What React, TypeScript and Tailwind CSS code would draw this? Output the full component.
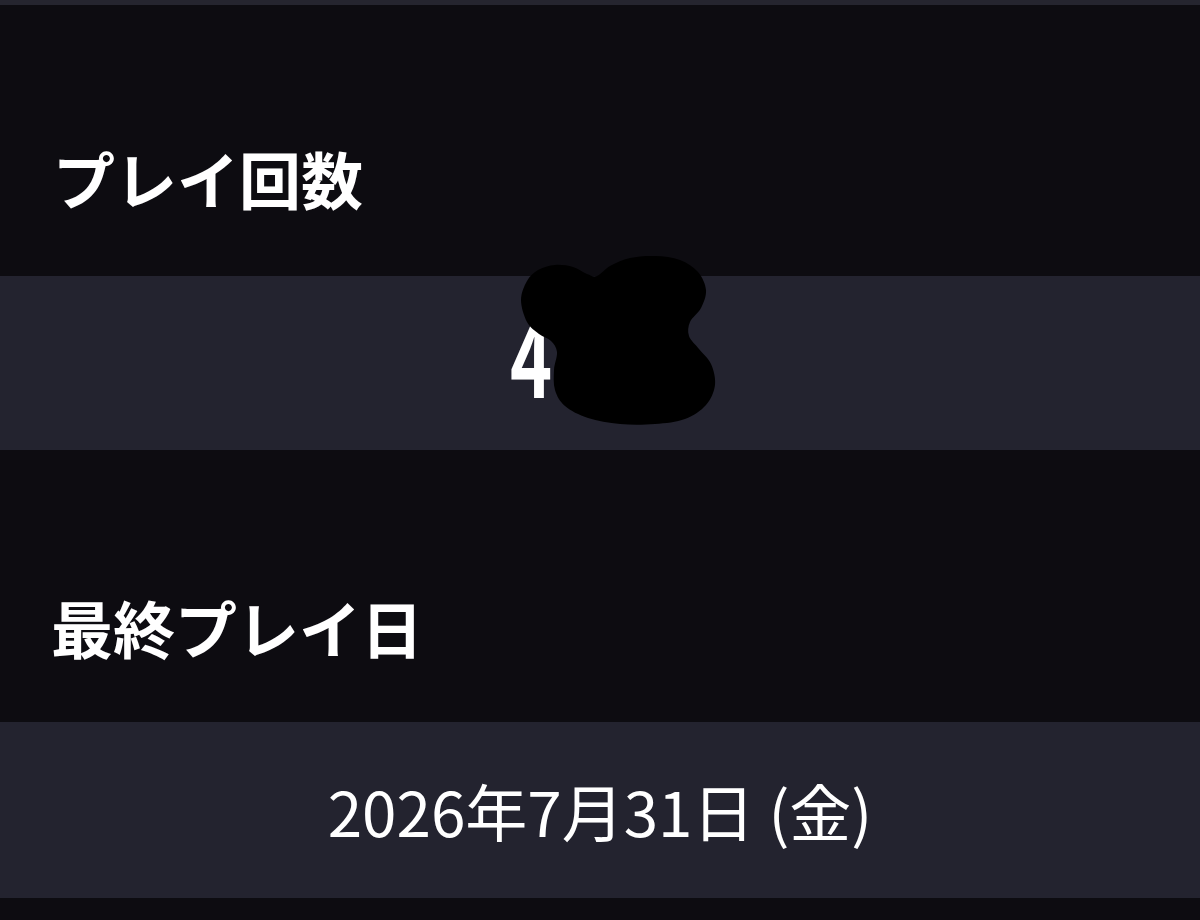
import React from "react";

const jp = { fontFamily: '"Noto Sans CJK JP", "Noto Sans", sans-serif' };

const pts: [number, number][] = [
  [521, 300],
  [527, 281],
  [538, 270],
  [555, 265],
  [573, 267],
  [587, 274],
  [597, 276],
  [610, 266],
  [630, 258],
  [655, 256],
  [680, 260],
  [698, 272],
  [706, 290],
  [701, 308],
  [690, 322],
  [689, 336],
  [699, 349],
  [711, 364],
  [715, 385],
  [706, 405],
  [685, 419],
  [655, 424],
  [620, 424],
  [588, 418],
  [565, 406],
  [555, 390],
  [554, 370],
  [557, 352],
  [551, 341],
  [539, 334],
  [527, 322],
];

function smoothPath(p: [number, number][]) {
  const n = p.length;
  let d = `M${p[0][0]} ${p[0][1]}`;
  for (let i = 0; i < n; i++) {
    const p0 = p[(i - 1 + n) % n];
    const p1 = p[i];
    const p2 = p[(i + 1) % n];
    const p3 = p[(i + 2) % n];
    const c1x = p1[0] + (p2[0] - p0[0]) / 6;
    const c1y = p1[1] + (p2[1] - p0[1]) / 6;
    const c2x = p2[0] - (p3[0] - p1[0]) / 6;
    const c2y = p2[1] - (p3[1] - p1[1]) / 6;
    d += ` C${c1x.toFixed(1)} ${c1y.toFixed(1)} ${c2x.toFixed(1)} ${c2y.toFixed(1)} ${p2[0]} ${p2[1]}`;
  }
  return d + " Z";
}

function Blob() {
  return (
    <svg
      className="absolute left-[500px] top-[-36px]"
      width="240"
      height="200"
      viewBox="500 240 240 200"
    >
      <path d={smoothPath(pts)} fill="#000" />
    </svg>
  );
}

export default function App() {
  return (
    <div className="w-[1200px] h-[920px] bg-[#0d0c11] overflow-hidden" style={jp}>
      <div className="h-[5px] bg-[#25252f]" />
      <div className="h-[271px] flex items-end pb-[67px] pl-[53px]">
        <h2 className="text-[62px] leading-[62px] font-bold text-white">
          プレイ回数
        </h2>
      </div>
      <div className="h-[174px] bg-[#23232f] relative flex items-center justify-center">
        <div className="relative w-[180px] h-[100px] flex items-center justify-start">
          <span className="relative top-[-9px] text-[102px] leading-[100px] font-bold text-white inline-block origin-left scale-x-[0.7]">
            4
          </span>
        </div>
        <div className="absolute left-0 top-0 w-full h-full">
          <div className="relative w-full h-full">
            <Blob />
          </div>
        </div>
      </div>
      <div className="h-[272px] flex items-end pb-[64px] pl-[51px]">
        <h2 className="text-[62px] leading-[62px] font-bold text-white">
          最終プレイ日
        </h2>
      </div>
      <div className="h-[176px] bg-[#23232f] flex items-center justify-center">
        <span className="text-[62px] leading-[64px] text-white font-normal">
          2026年7月31日 (金)
        </span>
      </div>
      <div className="h-[22px] bg-[#0d0c11]" />
    </div>
  );
}
